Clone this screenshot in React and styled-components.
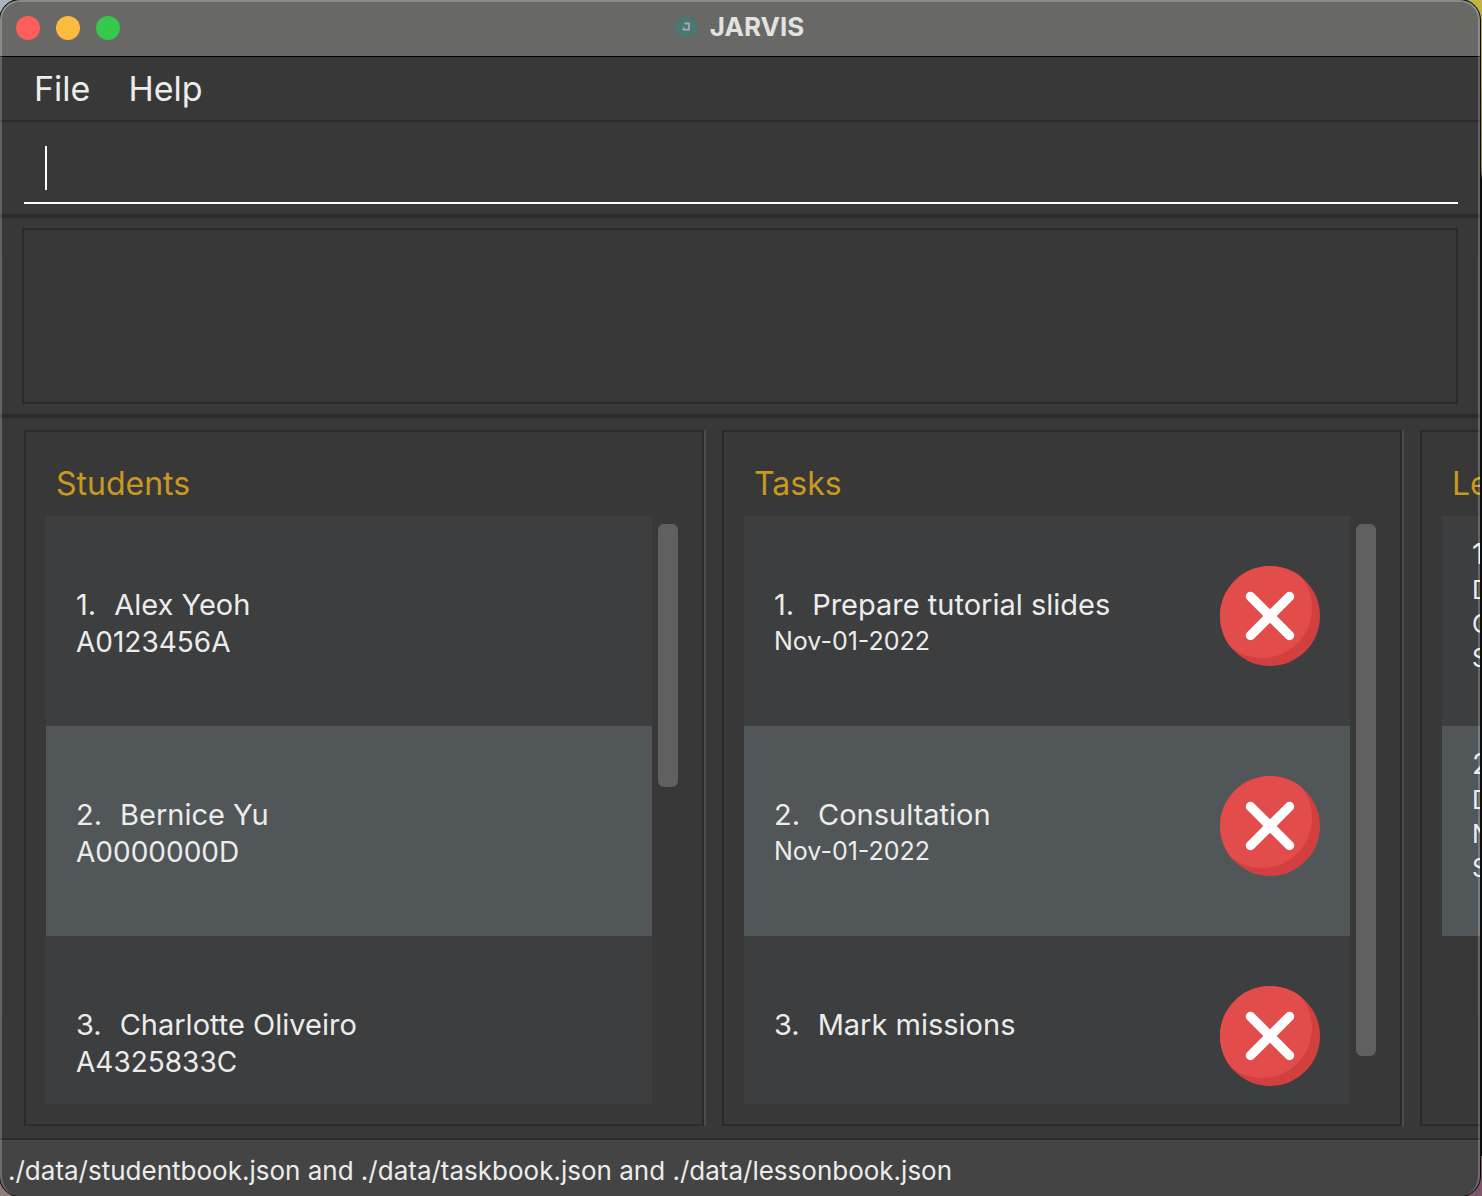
import React from "react";
import styled, { createGlobalStyle } from "styled-components";

const GlobalStyle = createGlobalStyle`
  * { box-sizing: border-box; }
  body {
    margin: 0;
    font-family: Inter, "Liberation Sans", sans-serif;
    color: #ececec;
    background:
      linear-gradient(#c3b445, #8f8a52 170px, transparent 180px) right top / 24px 180px no-repeat,
      linear-gradient(#7d5468, #7d5468) right bottom / 24px 40px no-repeat,
      linear-gradient(#8d7c7a, #8d7c7a) left bottom / 24px 24px no-repeat,
      linear-gradient(#aab4c0, #aab4c0) left top / 24px 24px no-repeat,
      #0c0c0c;
  }
  button, input, textarea { font: inherit; color: inherit; }
`;

const Window = styled.div`
  position: relative;
  display: flex;
  flex-direction: column;
  height: 100vh;
  margin-right: 2px;
  background: #383838;
  border-radius: 20px;
  overflow: hidden;
  box-shadow: 0 0 0 1px #0a0a0a;

  &::after {
    content: "";
    position: absolute;
    inset: 0;
    border: 2px solid rgba(255, 255, 255, 0.22);
    border-bottom: 0;
    border-radius: 20px;
    pointer-events: none;
  }
`;

const TitleBar = styled.header`
  display: grid;
  grid-template-columns: 1fr auto 1fr;
  align-items: center;
  height: 57px;
  flex: none;
  padding: 0 16px;
  background: #686866;
  border-bottom: 1px solid #000;
`;

const Lights = styled.div`
  display: flex;
  gap: 16px;
`;

const Light = styled.button`
  width: 24px;
  height: 24px;
  padding: 0;
  border: 0;
  border-radius: 50%;
  background: ${(p) => p.$color};
`;

const Title = styled.h1`
  display: flex;
  align-items: center;
  gap: 14px;
  margin: 0;
  padding-bottom: 2px;
  font-size: 26px;
  line-height: 54px;
  font-weight: 700;
  color: #e2e2e0;
`;

const MenuBar = styled.nav`
  display: flex;
  align-items: center;
  flex: none;
  height: 65px;
  gap: 38px;
  padding: 0 34px;
  border-bottom: 2px solid #2a2a2a;
`;

const MenuButton = styled.button`
  padding: 0;
  border: 0;
  background: none;
  font-size: 34px;
  line-height: 44px;
`;

const CommandArea = styled.form`
  flex: none;
  padding: 0 22px 10px 24px;
  border-bottom: 4px solid #2a2a2a;
`;

const CommandLine = styled.div`
  display: flex;
  align-items: center;
  padding: 24px 20px 12px;
  border-bottom: 2px solid #fff;
`;

const Caret = styled.span`
  flex: none;
  width: 2px;
  height: 44px;
  margin-left: 1px;
  background: #fff;
`;

const CommandInput = styled.input`
  flex: 1;
  min-width: 0;
  height: 44px;
  padding: 0;
  border: 0;
  outline: 0;
  background: none;
  font-size: 32px;
`;

const ResultArea = styled.section`
  display: flex;
  flex: none;
  padding: 10px 22px;
  border-bottom: 4px solid #2a2a2a;
`;

const ResultBox = styled.textarea`
  flex: 1;
  height: 176px;
  padding: 12px;
  border: 2px solid #2a2a2a;
  outline: 0;
  background: none;
  resize: none;
  font-size: 32px;
`;

const Panels = styled.main`
  display: flex;
  flex: 1;
  min-height: 0;
  gap: 16px;
  padding: 12px 0 12px 24px;
  overflow: hidden;
`;

const PanelEdge = styled.section`
  display: flex;
  flex: 1 0 682px;
  border-right: 2px solid #4c4c4c;
`;

const PanelBody = styled.div`
  display: flex;
  flex-direction: column;
  flex: 1;
  min-width: 0;
  padding: 0 20px 20px;
  border: 2px solid #2a2a2a;
`;

const PanelTitle = styled.h2`
  flex: none;
  margin: 20px 10px 0;
  font-size: 32px;
  line-height: 64px;
  font-weight: 400;
  color: #c9991f;
`;

const ListArea = styled.div`
  display: flex;
  flex: 1;
  min-height: 0;
  gap: 6px;
`;

const List = styled.ol`
  flex: 1;
  min-width: 0;
  margin: 0;
  padding: 0;
  list-style: none;
  overflow: hidden;
`;

const Track = styled.div`
  flex: none;
  width: 20px;
  margin: 8px 4px 8px 0;
`;

const Thumb = styled.div`
  height: ${(p) => p.$share}%;
  border-radius: 6px;
  background: #606060;
`;

const Row = styled.li`
  display: flex;
  justify-content: space-between;
  height: 210px;
  padding: 0 30px;
  background: #3c3e3f;

  &:nth-child(even) { background: #515658; }
`;

const Card = styled.div`
  padding-top: ${(p) => (p.$dense ? 19 : 70)}px;
  white-space: nowrap;
`;

const Name = styled.div`
  display: flex;
  gap: 18px;
  font-size: 29px;
  line-height: 38px;
`;

const StudentId = styled.div`
  font-size: 28px;
  line-height: 36px;
`;

const Detail = styled.div`
  font-size: 25px;
  line-height: 34px;
`;

const StatusIcon = styled.svg`
  flex: none;
  width: 100px;
  height: 100px;
  margin-top: 50px;
`;

const StatusBar = styled.footer`
  flex: none;
  height: 58px;
  padding: 0 8px;
  border-top: 2px solid #2a2a2a;
  background: #444;
  font-size: 26px;
  line-height: 62px;
  white-space: nowrap;
`;

const Logo = () => (
  <svg width="20" height="22" viewBox="0 0 20 22" aria-hidden="true">
    <path d="M10 0.5 19.3 5.6v10.8L10 21.5.7 16.4V5.6z" fill="#477a72" stroke="#477a72" strokeLinejoin="round" />
    <path d="M8.500 7.500h4.500v6.200H7.500v-2.200" fill="none" stroke="#b39fbd" strokeWidth="1.800" />
  </svg>
);

const Cross = () => (
  <StatusIcon viewBox="0 0 100 100" role="img" aria-label="Not done">
    <clipPath id="disc">
      <circle cx="50" cy="50" r="50" />
    </clipPath>
    <circle cx="50" cy="50" r="50" fill="#d1403f" />
    <circle cx="42" cy="42" r="50" fill="#e24c4b" clipPath="url(#disc)" />
    <path d="M30.500 30.500l39 39M69.500 30.500l-39 39" stroke="#fff" strokeWidth="9.500" strokeLinecap="round" />
  </StatusIcon>
);

const students = [
  { name: "Alex Yeoh", id: "A0123456A" },
  { name: "Bernice Yu", id: "A0000000D" },
  { name: "Charlotte Oliveiro", id: "A4325833C" },
];

const tasks = [
  { name: "Prepare tutorial slides", date: "Nov-01-2022" },
  { name: "Consultation", date: "Nov-01-2022" },
  { name: "Mark missions" },
];

const lessons = [["D", "C", "S"], ["D", "N", "S"]];

function Panel({ title, share, children }) {
  return (
    <PanelEdge aria-label={title}>
      <PanelBody>
        <PanelTitle>{title}</PanelTitle>
        <ListArea>
          <List>{children}</List>
          <Track>{share && <Thumb $share={share} />}</Track>
        </ListArea>
      </PanelBody>
    </PanelEdge>
  );
}

export default function App() {
  return (
    <>
      <GlobalStyle />
      <Window>
        <TitleBar>
          <Lights>
            <Light type="button" aria-label="Close" $color="#fe5f58" />
            <Light type="button" aria-label="Minimize" $color="#fdbb40" />
            <Light type="button" aria-label="Zoom" $color="#35c84b" />
          </Lights>
          <Title>
            <Logo />
            JARVIS
          </Title>
        </TitleBar>
        <MenuBar>
          <MenuButton type="button">File</MenuButton>
          <MenuButton type="button">Help</MenuButton>
        </MenuBar>
        <CommandArea onSubmit={(e) => e.preventDefault()}>
          <CommandLine>
            <Caret />
            <CommandInput type="text" aria-label="Command" />
          </CommandLine>
        </CommandArea>
        <ResultArea>
          <ResultBox readOnly aria-label="Result" />
        </ResultArea>
        <Panels>
          <Panel title="Students" share={46}>
            {students.map((s, i) => (
              <Row key={s.id}>
                <Card>
                  <Name><span>{i + 1}.</span><span>{s.name}</span></Name>
                  <StudentId>{s.id}</StudentId>
                </Card>
              </Row>
            ))}
          </Panel>
          <Panel title="Tasks" share={93}>
            {tasks.map((t, i) => (
              <Row key={t.name}>
                <Card>
                  <Name><span>{i + 1}.</span><span>{t.name}</span></Name>
                  {t.date && <Detail>{t.date}</Detail>}
                </Card>
                <Cross />
              </Row>
            ))}
          </Panel>
          <Panel title="Lessons">
            {lessons.map((lines, i) => (
              <Row key={i}>
                <Card $dense>
                  <Name>{i + 1}.</Name>
                  {lines.map((line) => <Detail key={line}>{line}</Detail>)}
                </Card>
              </Row>
            ))}
          </Panel>
        </Panels>
        <StatusBar>./data/studentbook.json and ./data/taskbook.json and ./data/lessonbook.json</StatusBar>
      </Window>
    </>
  );
}
